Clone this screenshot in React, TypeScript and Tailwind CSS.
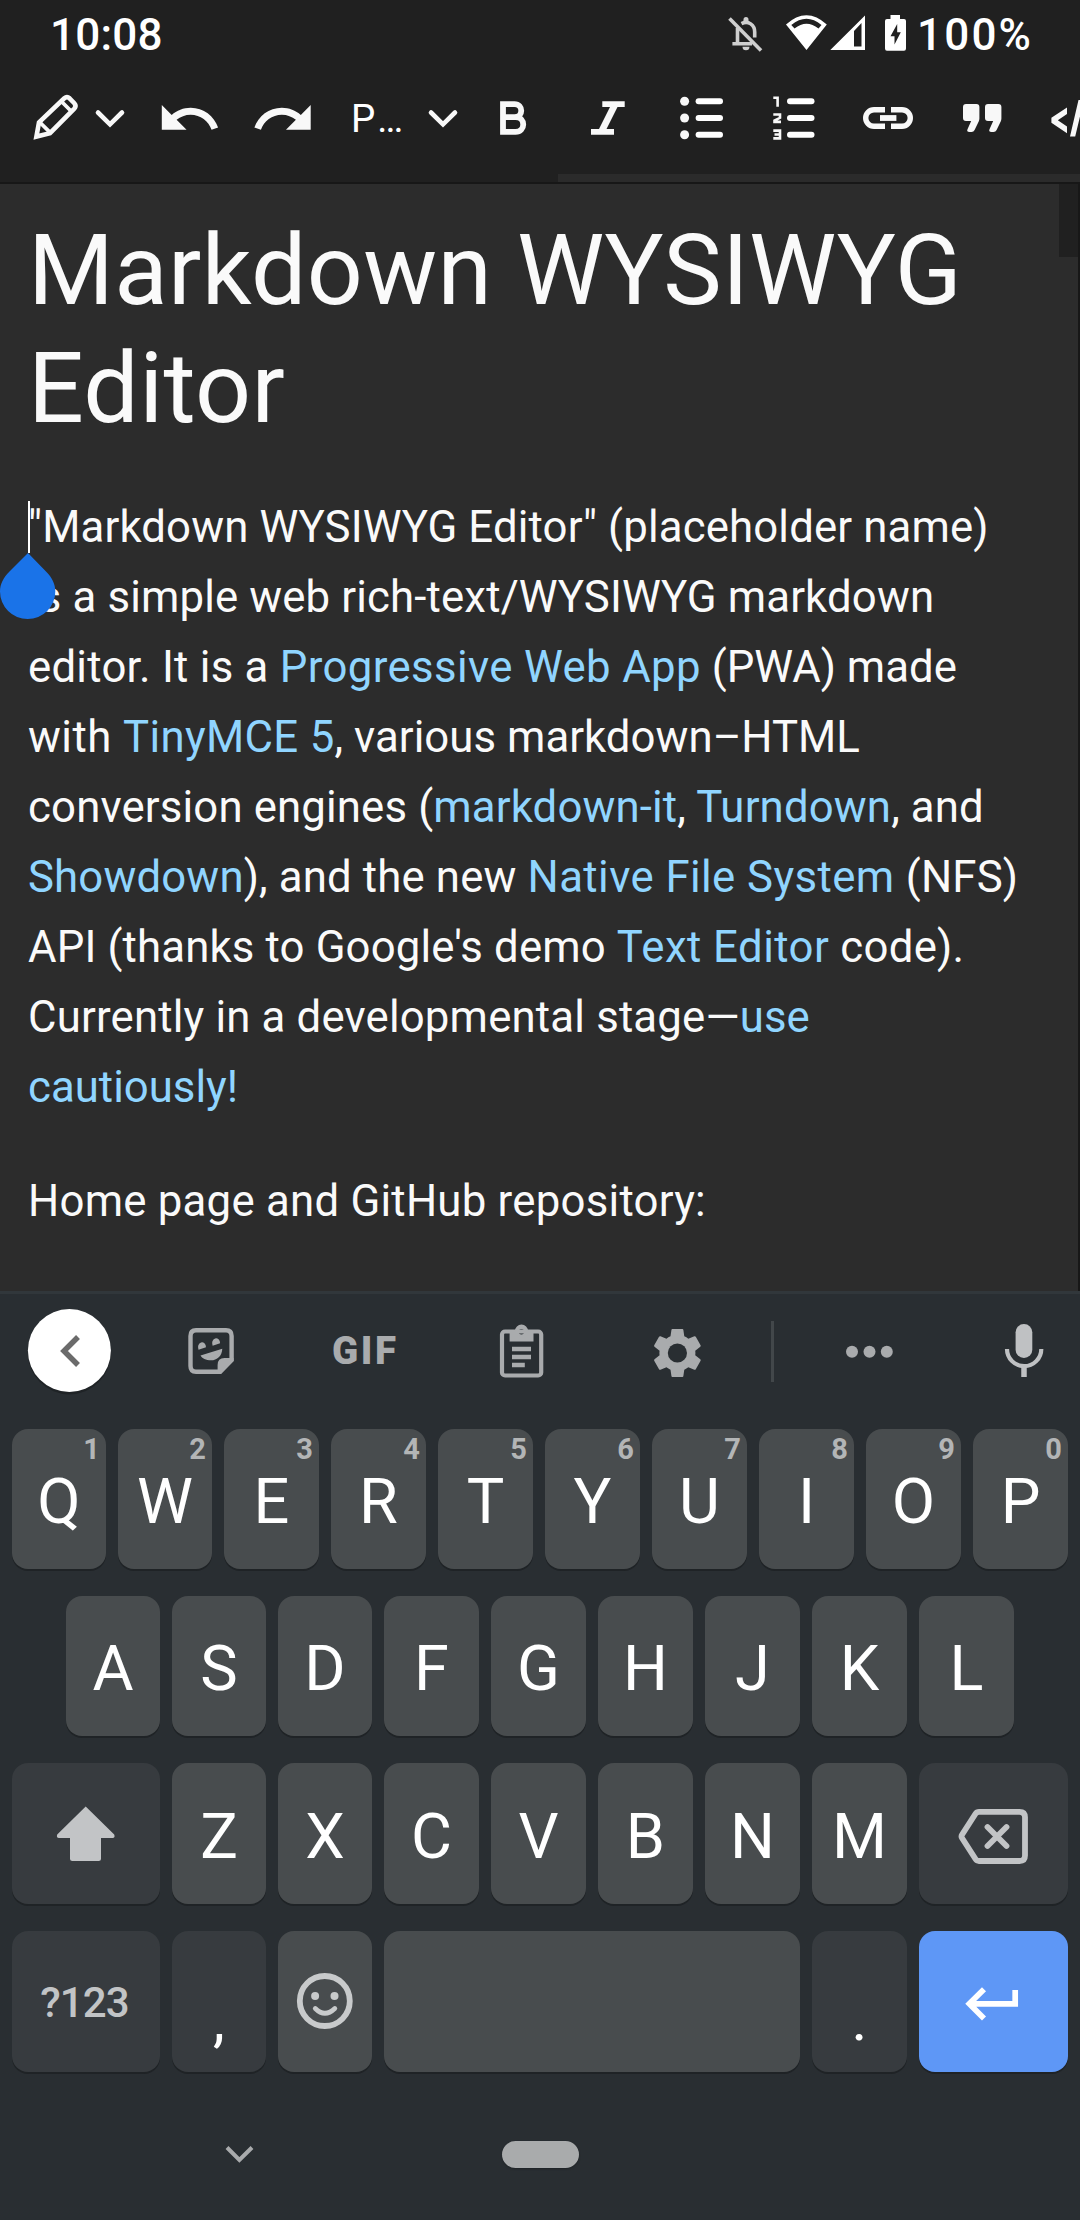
import React from "react";

type CellProps = {
  x: number;
  y: number;
  w: number;
  h: number;
  label?: string;
  className?: string;
  children: React.ReactNode;
};

// An icon cell whose drawing uses the screen's own pixel grid.
function Cell({ x, y, w, h, label, className = "", children }: CellProps) {
  return (
    <svg
      role="img"
      aria-label={label}
      className={`block shrink-0 ${className}`}
      width={w}
      height={h}
      viewBox={`${x} ${y} ${w} ${h}`}
      fill="none"
    >
      {children}
    </svg>
  );
}

function StatusBar() {
  return (
    <div className="flex h-[72px] items-start justify-between pl-[50px] pr-[49px] text-[44px] font-medium leading-[70px] text-white">
      <span className="tracking-[0.2px]">10:08</span>
      <div className="flex">
        <Cell x={724} y={0} w={191} h={70} label="Status">
          <g stroke="#cfcfcf" strokeWidth="3.6">
            <path d="M729.5 18.5 761 50.5" />
            <path d="M737.5 28v15.5M732.4 43.7H752" />
            <path d="M741.5 23.6c7-3.6 13.2 1.500 13.2 8.400v5.500" />
          </g>
          <path d="M743.500 21v-1.500a2.500 2.500 0 0 1 5 0V21zM742.500 46.800h7a3.500 3.500 0 0 1-7 0z" fill="#cfcfcf" />
          <path
            fill="#fff"
            fillRule="evenodd"
            d="M786 24.500Q806.500 6 826.800 24.500L806.500 50ZM791.300 25 794.500 28.500Q806.500 19 818.500 28.500L821.500 25Q806.500 12.500 791.300 25Z"
          />
          <path fill="#fff" fillRule="evenodd" d="M865 15.500V50H830.300ZM861.500 23 854 31V46.500H861.500Z" />
          <path
            fill="#fff"
            fillRule="evenodd"
            d="M890.500 15H900V19H904Q906 19 906 21V48.500Q906 50.700 904 50.700H887Q885 50.700 885 48.500V21Q885 19 887 19H890.500ZM897.200 24 890.500 36.200H894.500V44.500L900.800 32.300H897.200Z"
          />
        </Cell>
        <span className="ml-[2px] w-[114px] whitespace-nowrap tracking-[2.2px]">100%</span>
      </div>
    </div>
  );
}

function Chevron({ cx }: { cx: number }) {
  return (
    <path
      d={`M${cx - 12} 112.500 ${cx} 124.300 ${cx + 12} 112.500`}
      stroke="#f8f8f8"
      strokeWidth="4.600"
      strokeLinecap="round"
    />
  );
}

function Toolbar() {
  const top = 72;
  const h = 102;
  return (
    <div className="h-[110px]">
      <div className="flex h-[102px] overflow-hidden">
        <Cell x={0} y={top} w={88} h={h} label="Edit mode">
          <g stroke="#f8f8f8" strokeWidth="4.600">
            <path d="M36.400 136.600 39 122.400 64.300 98.300Q67 96 69.600 98.300L74.300 103.200Q76.700 106 74.300 108.600L50 133.200Z" />
            <path d="M39.500 122 51 133.300M61.500 101.500 71.500 111.500" strokeWidth="3.800" />
          </g>
        </Cell>
        <Cell x={88} y={top} w={56} h={h} label="Open modes">
          <Chevron cx={110} />
        </Cell>
        <Cell x={144} y={top} w={92} h={h} label="Undo">
          <path
            transform="translate(156.300 85.750) scale(2.750)"
            fill="#f8f8f8"
            d="M12.500 8c-2.650 0-5.050.99-6.900 2.600L2 7v9h9l-3.620-3.620c1.390-1.160 3.160-1.880 5.120-1.880 3.540 0 6.550 2.310 7.600 5.500l2.370-.78C21.080 11.030 17.150 8 12.500 8z"
          />
        </Cell>
        <Cell x={236} y={top} w={94} h={h} label="Redo">
          <path
            transform="translate(316.200 85.750) scale(-2.750 2.750)"
            fill="#f8f8f8"
            d="M12.500 8c-2.650 0-5.050.99-6.900 2.600L2 7v9h9l-3.620-3.620c1.390-1.160 3.160-1.880 5.120-1.880 3.540 0 6.550 2.310 7.600 5.500l2.370-.78C21.080 11.030 17.150 8 12.500 8z"
          />
        </Cell>
        <span className="w-[90px] whitespace-nowrap pl-[21px] text-[38.5px] leading-[94px] text-white">
          P<span className="ml-[2px] tracking-[-2px]">...</span>
        </span>
        <Cell x={420} y={top} w={60} h={h} label="Open formats">
          <Chevron cx={443} />
        </Cell>
        <Cell x={480} y={top} w={70} h={h} label="Bold">
          <path
            d="M503 104.200H514.500C523.500 104.200 523.500 117.200 514.500 117.200H503M503 117.200H515.500C525.800 117.200 525.800 131.900 515.500 131.900H503ZM503 101.300V134.700"
            stroke="#f8f8f8"
            strokeWidth="5.800"
          />
        </Cell>
        <Cell x={550} y={top} w={100} h={h} label="Italic">
          <path
            fill="#f8f8f8"
            d="M602.300 101.300H624.700V107H617.500L606.500 129H614V134.700H591V129H599L610 107H602.300Z"
          />
        </Cell>
        <Cell x={650} y={top} w={100} h={h} label="Bullet list">
          {[101.3, 118, 134.7].map((y) => (
            <g key={y}>
              <circle cx="684.600" cy={y} r="4.500" fill="#f8f8f8" />
              <path d={`M698.600 ${y}H720`} stroke="#fff" strokeWidth="6" strokeLinecap="round" />
            </g>
          ))}
        </Cell>
        <Cell x={750} y={top} w={90} h={h} label="Numbered list">
          {[101.3, 118, 134.7].map((y) => (
            <path key={y} d={`M790 ${y}H811.500`} stroke="#fff" strokeWidth="6" strokeLinecap="round" />
          ))}
          <path
            d="M773.300 97.700H777.600V106.700M773.300 114.500H780V117.800L774.500 120.500V121.900H781M773.300 130.600H780V138.400H773.300M774.500 134.500H780"
            stroke="#f8f8f8"
            strokeWidth="2.600"
          />
        </Cell>
        <Cell x={840} y={top} w={95} h={h} label="Link">
          <path
            d="M885 109.700H874A8.300 8.300 0 0 0 874 126.300H885M891 109.700H902A8.300 8.300 0 0 1 902 126.300H891"
            stroke="#f8f8f8"
            strokeWidth="5.400"
          />
          <path d="M880 118H896.400" stroke="#f8f8f8" strokeWidth="5.800" />
        </Cell>
        <Cell x={935} y={top} w={95} h={h} label="Quote">
          {[0, 22].map((dx) => (
            <path
              key={dx}
              transform={`translate(${dx} 0)`}
              fill="#f8f8f8"
              d="M966 104H976.400Q979.400 104 979.400 107V118.500Q979.400 120 978.700 121.500L974.600 130Q973.700 132 971.500 132H969.500Q966.300 132 967.500 129.300L971.200 121H966Q963 121 963 118V107Q963 104 966 104Z"
            />
          ))}
        </Cell>
        <Cell x={1030} y={top} w={50} h={h} label="Code">
          <path
            fill="#f8f8f8"
            d="M1067 107.500 1051.400 117.800V122.800L1067 133.200V126.500L1057.800 120.300 1067 114ZM1070 136.500H1075.200L1084 100H1078.500Z"
          />
        </Cell>
      </div>
      <div className="ml-[558px] h-2 bg-[#2b2b2b]" />
    </div>
  );
}

function Link({ className = "", children }: { className?: string; children: string }) {
  return <a className={`text-[#90d5ff] ${className}`}>{children}</a>;
}

function Editor() {
  return (
    <div className="relative h-[1109px] overflow-hidden border-r-2 border-t-2 border-[#171717] bg-[#2c2c2c] pl-7 pt-7 text-[#fafafa]">
      <h1 className="text-[98.4px] leading-[118px] tracking-[0.33px]">
        Markdown WYSIWYG
        <br />
        Editor
      </h1>
      <p className="mt-11 whitespace-nowrap text-[43.75px] leading-[70px] tracking-[0.14px]">
        "Markdown WYSIWYG Editor" (placeholder name)
        <br />
        is a simple web rich-text/WYSIWYG markdown
        <br />
        <span className="tracking-[0.25px]">editor. It is a </span>
        <Link className="tracking-[0.36px]">Progressive Web App</Link>
        <span className="tracking-[0]"> (PWA) made</span>
        <br />
        <span className="tracking-[0.45px]">with </span>
        <Link className="tracking-[0.33px]">TinyMCE 5</Link>
        <span className="tracking-[0.03px]">, various markdown–HTML</span>
        <br />
        conversion engines (<Link>markdown-it</Link>, <Link>Turndown</Link>, and
        <br />
        <Link>Showdown</Link>), and the new <Link className="tracking-[0.42px]">Native File System</Link>
        <span className="tracking-[0.2px]"> (NFS)</span>
        <br />
        API (thanks to Google's demo <Link className="tracking-[0.45px]">Text Editor</Link>
        <span className="tracking-[0.25px]"> code).</span>
        <br />
        <span className="tracking-[0.17px]">Currently in a developmental stage—</span>
        <Link className="tracking-[0]">use</Link>
        <br />
        <Link className="tracking-[0]">cautiously!</Link>
      </p>
      <p className="mt-11 text-[43.75px] leading-[70px] tracking-[0.24px]">Home page and GitHub repository:</p>
      <div className="absolute right-0 top-0 h-[73px] w-[19px] bg-[#202020]" />
      <div className="absolute left-7 top-[317px] h-[52px] w-[2px] bg-white" />
      <Cell x={0} y={552} w={56} h={68} label="Cursor handle" className="absolute left-0 top-[368px]">
        <path
          fill="#1a73e8"
          d="M28 553 46 571.500C52 577.500 55.300 584 55.300 591.500A27.600 27.500 0 0 1 0 591.500C0 584 3.500 577.500 9.500 571.500Z"
        />
      </Cell>
    </div>
  );
}

function SuggestionBar() {
  const y = 1294;
  const h = 135;
  const g = "#a9abad";
  return (
    <div className="flex h-[135px]">
      <Cell x={0} y={y} w={150} h={h} label="Back">
        <circle cx="69.400" cy="1353" r="41.500" fill="#1f2326" />
        <circle cx="69.400" cy="1350.500" r="41.500" fill="#fff" />
        <path d="M78 1337 64 1351 78 1365" stroke="#6b6b6b" strokeWidth="5.500" />
      </Cell>
      <Cell x={150} y={y} w={150} h={h} label="Stickers">
        <path
          d="M196 1330.300H226Q231.600 1330.300 231.600 1336V1360L220 1371.700H196Q190.500 1371.700 190.500 1366V1336Q190.500 1330.300 196 1330.300Z"
          stroke={g}
          strokeWidth="4.400"
        />
        <path
          fill={g}
          d="M217.600 1373.500V1365Q217.600 1358 224.500 1358H233.500V1361L221 1373.900ZM200.500 1355.500 222.300 1348.700C222 1356 217 1360.300 211 1360.300 206 1360.300 202 1358.500 200.500 1355.500ZM198.500 1349.700A4 5 0 1 1 206 1347.300ZM212.600 1345.700A4 5 0 1 1 220.100 1343.300Z"
        />
      </Cell>
      <span className="w-[150px] pl-8 text-[38.5px] font-black leading-[114px] tracking-[2.5px] text-[#a9abad]">GIF</span>
      <Cell x={450} y={y} w={150} h={h} label="Clipboard">
        <rect x="502" y="1331.500" width="39.200" height="44" rx="3" stroke={g} strokeWidth="4.200" />
        <path
          fill={g}
          fillRule="evenodd"
          d="M509.600 1341.500V1331H515A6.500 6.500 0 0 1 528 1331H533.500V1341.500ZM518.700 1331.800A2.700 2.700 0 1 0 524.100 1331.800 2.700 2.700 0 1 0 518.700 1331.800Z"
        />
        <path d="M512 1349H531M512 1357H531M512 1365H524.800" stroke={g} strokeWidth="4.300" />
      </Cell>
      <Cell x={600} y={y} w={150} h={h} label="Settings">
        <path
          transform="translate(648.600 1324.200) scale(2.400)"
          fill={g}
          d="M19.430 12.980c.04-.32.07-.64.07-.98s-.03-.66-.07-.98l2.110-1.650c.19-.15.24-.42.12-.64l-2-3.460c-.12-.22-.39-.3-.61-.22l-2.490 1c-.52-.4-1.080-.73-1.690-.98l-.38-2.650C14.460 2.180 14.250 2 14 2h-4c-.25 0-.46.18-.49.42l-.38 2.650c-.61.25-1.170.59-1.690.98l-2.490-1c-.23-.09-.49 0-.61.22l-2 3.460c-.13.22-.07.49.12.64l2.110 1.650c-.04.32-.07.65-.07.98s.03.66.07.98l-2.110 1.650c-.19.15-.24.42-.12.64l2 3.460c.12.22.39.3.61.22l2.490-1c.52.4 1.080.73 1.690.98l.38 2.650c.03.24.24.42.49.42h4c.25 0 .46-.18.49-.42l.38-2.650c.61-.25 1.170-.59 1.690-.98l2.490 1c.23.09.49 0 .61-.22l2-3.460c.12-.22.07-.49-.12-.64l-2.110-1.650z"
        />
        <circle cx="677.400" cy="1353" r="9.600" fill="#292e32" />
      </Cell>
      <div className="ml-[21px] mt-[27px] h-[61px] w-[3px] bg-[#42474a]" />
      <Cell x={774} y={y} w={190} h={h} label="More">
        {[852, 869.5, 886.8].map((cx) => (
          <circle key={cx} cx={cx} cy="1351.700" r="6" fill={g} />
        ))}
      </Cell>
      <Cell x={964} y={y} w={116} h={h} label="Voice input">
        <rect x="1015.600" y="1324" width="16.700" height="34" rx="8.300" fill="#bfc1c3" />
        <path d="M1007 1349A17 17 0 0 0 1041.300 1349" stroke="#bfc1c3" strokeWidth="4.200" />
        <path d="M1024 1365V1377" stroke="#bfc1c3" strokeWidth="5.500" />
      </Cell>
    </div>
  );
}

const KEY = "relative flex h-full shrink-0 justify-center rounded-[16px] shadow-[0_2px_0_#1f2326]";

function Letter({ ch, hint, narrow, low }: { ch: string; hint?: string; narrow?: boolean; low?: boolean }) {
  return (
    <div
      className={`${KEY} ${narrow ? "w-[94px]" : "w-[95px]"} ${low ? "pt-[4px]" : "pt-[3px]"} bg-[#484c4e] text-[63px] leading-[140px] text-white`}
    >
      {ch}
      {hint && (
        <span className="absolute right-[6px] top-[2px] text-[29px] font-bold leading-[37px] text-[#b3b5b6]">{hint}</span>
      )}
    </div>
  );
}

function Keyboard() {
  return (
    <div className="h-[929px] border-t-[3px] border-[#31373b] bg-[#292e32]">
      <SuggestionBar />
      <div className="flex flex-col gap-[27px] px-3">
        <div className="flex h-[140px] gap-3">
          {"QWERTYUIOP".split("").map((c, i) => (
            <Letter key={c} ch={c} hint={String((i + 1) % 10)} narrow={i < 2} />
          ))}
        </div>
        <div className="flex h-[140px] gap-3 px-[54px]">
          {"ASDFGHJKL".split("").map((c, i) => (
            <Letter key={c} ch={c} narrow={i < 3} />
          ))}
        </div>
        <div className="flex h-[141px] gap-3">
          <div className={`${KEY} w-[148px] bg-[#373b3f]`}>
            <Cell x={12} y={1763} w={148} h={141} label="Shift">
              <path
                fill="#c2c4c6"
                d="M85.700 1806.500 114.200 1834.500Q115.500 1837.900 112.500 1838H101V1858.500Q101 1861 98.500 1861H72.500Q70 1861 70 1858.500V1838H59Q56 1837.900 57.200 1834.500Z"
              />
            </Cell>
          </div>
          {"ZXCVBNM".split("").map((c, i) => (
            <Letter key={c} ch={c} narrow={i < 2} low />
          ))}
          <div className={`${KEY} w-[149px] bg-[#373b3f]`}>
            <Cell x={919} y={1763} w={149} h={141} label="Backspace">
              <path
                d="M979 1811.800H1019.500Q1025 1811.800 1025 1817.300V1855.500Q1025 1861 1019.500 1861H979Q976.800 1861 975.500 1859L962 1838Q961 1836.400 962 1834.800L975.500 1813.800Q976.800 1811.800 979 1811.800Z"
                stroke="#c2c4c6"
                strokeWidth="5.800"
              />
              <path
                d="M987.500 1827 1006.500 1846M1006.500 1827 987.500 1846"
                stroke="#c2c4c6"
                strokeWidth="5.800"
                strokeLinecap="round"
              />
            </Cell>
          </div>
        </div>
        <div className="flex h-[141px] gap-3">
          <div className={`${KEY} w-[148px] bg-[#373b3f] pr-[3px] text-[42px] font-medium leading-[143px] tracking-[-0.9px] text-[#c2c4c6]`}>
            ?123
          </div>
          <div className={`${KEY} w-[94px] bg-[#373b3f] pt-[19px] text-[60px] leading-[140px] text-white`}>,</div>
          <div className={`${KEY} w-[94px] bg-[#484c4e]`}>
            <Cell x={278} y={1931} w={94} h={141} label="Emoji">
              <circle cx="324.800" cy="2001" r="25" stroke="#c8cacb" strokeWidth="5.800" />
              <circle cx="315.100" cy="1996" r="4" fill="#c8cacb" />
              <circle cx="334.500" cy="1996" r="4" fill="#c8cacb" />
              <path
                d="M315.300 2008.500Q324.800 2018 334.800 2008.500"
                stroke="#c8cacb"
                strokeWidth="4.800"
                strokeLinecap="round"
              />
            </Cell>
          </div>
          <div className={`${KEY} flex-1 bg-[#484c4e]`} />
          <div className={`${KEY} w-[95px] bg-[#373b3f] pt-[19px] text-[60px] leading-[140px] text-white`}>.</div>
          <div className={`${KEY} w-[149px] bg-[#5e97f6]`}>
            <Cell x={919} y={1931} w={149} h={141} label="Enter">
              <path d="M984 1989.200 969.300 2003.800 984 2018.400M969.300 2003.800H1015.200V1990" stroke="#fff" strokeWidth="5.700" />
            </Cell>
          </div>
        </div>
      </div>
      <div className="flex h-[148px] items-start">
        <Cell x={0} y={2072} w={502} h={148} label="Hide keyboard">
          <path d="M227 2147.500 239.400 2160 252 2147.500" stroke="#a9abad" strokeWidth="4" />
        </Cell>
        <div className="mt-[69px] h-[27px] w-[77px] rounded-full bg-[#a9abac] shadow-[0_1px_2px_#1f2326]" />
      </div>
    </div>
  );
}

export default function App() {
  return (
    <div className="h-[2220px] w-[1080px] overflow-hidden bg-[#202020] font-['Roboto',sans-serif]">
      <StatusBar />
      <Toolbar />
      <Editor />
      <Keyboard />
    </div>
  );
}
